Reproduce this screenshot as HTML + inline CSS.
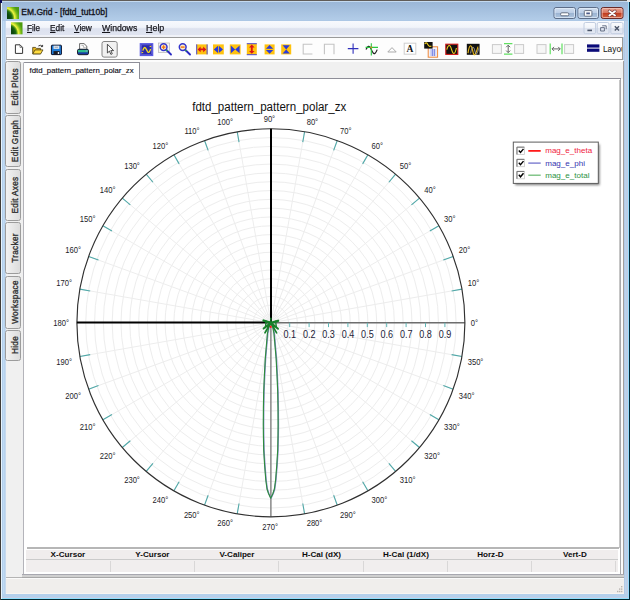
<!DOCTYPE html>
<html><head><meta charset="utf-8"><title>EM.Grid - [fdtd_tut10b]</title>
<style>
html,body{margin:0;padding:0;background:#fff;}
body{width:630px;height:600px;overflow:hidden;position:relative;font-family:"Liberation Sans",sans-serif;}
#win{position:absolute;left:0;top:0;width:630px;height:600px;background:#b6d0ea;overflow:hidden;}
.abs{position:absolute;}
#title{left:21.3px;top:7.4px;font-size:8.5px;color:#101018;-webkit-text-stroke:0.3px #101018;white-space:nowrap;line-height:10px;}
#menubar{left:6px;top:21px;width:618px;height:14px;background:linear-gradient(#f7f9fd 0%,#f1f4fa 45%,#dde2ef 55%,#e0e4f0 100%);}
#menubar2{left:6px;top:35px;width:618px;height:2px;background:#f0f2f8;}
.mi{position:absolute;top:23.2px;font-size:9px;line-height:10px;-webkit-text-stroke:0.25px #15151c;transform:scaleX(0.9);transform-origin:0 0;color:#15151c;white-space:nowrap;}
.mi u{text-decoration:underline;text-decoration-thickness:1px;text-underline-offset:1px;}
#toolbar{left:6px;top:37px;width:617px;height:23px;background:#fdfdfd;box-sizing:border-box;border:1px solid #9a9a9a;border-left-color:#b5b5b5;}
#client{left:6px;top:60px;width:618px;height:519px;background:#f0f0f0;}
#status{left:6px;top:578px;width:618px;height:16px;background:#f0eeec;border-top:1px solid #fafafa;border-bottom:1px solid #f8f4f0;box-sizing:border-box;}
.vtab{position:absolute;left:5.4px;width:16.1px;box-sizing:border-box;border:1px solid #9c9c9c;border-radius:2.5px;background:linear-gradient(90deg,#f2f2f2,#dcdcdc);}
.vtab span{position:absolute;left:50%;top:50%;transform:translate(-50%,-50%) rotate(-90deg) scaleX(0.93);white-space:nowrap;font-size:8.9px;font-weight:normal;-webkit-text-stroke:0.3px #2a2a2a;color:#2a2a2a;margin-left:1.2px;letter-spacing:0.3px}
.al{font-size:8.6px;fill:#1c1c28;font-family:"Liberation Sans",sans-serif;}
.rl{font-size:10.5px;fill:#1c1c38;font-family:"Liberation Sans",sans-serif;}
.ttl{font-size:12px;fill:#111;font-family:"Liberation Sans",sans-serif;}
.cur{position:absolute;top:549.5px;height:9px;margin-left:0.4px;font-size:8.1px;font-weight:bold;color:#0c0c0c;text-align:center;line-height:9px;white-space:nowrap;}
</style></head><body>
<div id="win">

<div class="abs" style="left:0;top:0;width:630px;height:21px;background:linear-gradient(180deg,#9ab5d5 0,#9cb8d8 3px,#b2cce8 20px,#a6c2e2 21px)"></div>
<div class="abs" style="left:0;top:21px;width:6px;height:579px;background:linear-gradient(90deg,#403c38 0,#403c38 1px,#e6f4fe 1px,#e6f4fe 2px,#b2cdea 2px,#b2cdea 3px,#c0dbf4 3px,#c0dbf4 4px,#b8d2ec 4px,#b8d2ec 5px,#c6d9ee 5px)"></div>
<div class="abs" style="left:624px;top:21px;width:6px;height:579px;background:linear-gradient(90deg,#b2cae6 0,#b2cae6 1px,#bcd2ee 1px,#bcd2ee 2px,#b8d0e8 2px,#b8d0e8 3px,#c4cce4 3px,#c4cce4 4px,#98dcfc 4px,#98dcfc 5px,#002838 5px)"></div>
<div class="abs" style="left:0;top:594px;width:630px;height:6px;background:linear-gradient(180deg,#b4d0ec 0,#b4d0ec 3px,#c8cce4 3px,#c8cce4 4px,#90e0ff 4px,#90e0ff 5px,#002830 5px)"></div>
<div class="abs" style="left:0;top:0;width:630px;height:1px;background:#605c58"></div>
<div class="abs" style="left:1px;top:1px;width:628px;height:1px;background:#c4daf0"></div>
<div class="abs" style="left:0;top:0;width:1px;height:600px;background:#403c38"></div>
<div class="abs" style="left:1px;top:1px;width:1px;height:598px;background:#e6f4fe"></div>
<div class="abs" style="left:629px;top:0;width:1px;height:600px;background:#002838"></div>
<div class="abs" style="left:628px;top:1px;width:1px;height:598px;background:#98dcfc"></div>
<div class="abs" style="left:0;top:0;width:2px;height:3px;background:#0a0a5a"></div>
<div class="abs" style="left:627px;top:0;width:3px;height:2px;background:#e8e8e8"></div>
<div class="abs" id="title">EM.Grid - [fdtd_tut10b]</div>
<div class="abs" id="menubar"></div><div class="abs" id="menubar2"></div>
<div class="mi" style="left:26.8px;transform:scaleX(0.9)"><u>F</u>ile</div>
<div class="mi" style="left:49.6px;transform:scaleX(0.92)"><u>E</u>dit</div>
<div class="mi" style="left:74.2px;transform:scaleX(0.92)"><u>V</u>iew</div>
<div class="mi" style="left:101.8px;transform:scaleX(0.965)"><u>W</u>indows</div>
<div class="mi" style="left:146.4px;transform:scaleX(0.99)"><u>H</u>elp</div>
<div class="abs" id="toolbar"></div>
<div class="abs" id="client"></div>
<div class="abs" style="left:6px;top:60px;width:617px;height:1.5px;background:#fcfcfc"></div>
<!-- left vertical tabs -->
<div class="vtab" style="top:61.4px;height:52.2px"><span>Edit Plots</span></div>
<div class="vtab" style="top:115px;height:52.4px"><span>Edit Graph</span></div>
<div class="vtab" style="top:168.6px;height:52.4px"><span>Edit Axes</span></div>
<div class="vtab" style="top:222.4px;height:51.8px"><span>Tracker</span></div>
<div class="vtab" style="top:275.6px;height:53.2px"><span>Workspace</span></div>
<div class="vtab" style="top:329.7px;height:31.3px"><span>Hide</span></div>
<!-- tab strip + page -->
<div class="abs" style="left:23px;top:77.8px;width:598px;height:1px;background:#8e8e98"></div>
<div class="abs" style="left:140px;top:78.8px;width:481px;height:0.8px;background:#d2d2d8"></div>
<div class="abs" style="left:23px;top:62px;width:117px;height:17px;background:#fff;border:1px solid #8e8e98;border-left-color:#b4b4ba;border-bottom:none;border-radius:1.5px 0 0 0;box-sizing:border-box;"></div>
<div class="abs" style="left:29.5px;top:65.6px;font-size:7.8px;line-height:9px;color:#101018;-webkit-text-stroke:0.15px #101018;white-space:nowrap;" id="tabtxt">fdtd_pattern_pattern_polar_zx</div>
<div class="abs" style="left:23px;top:79px;width:598px;height:495px;background:#fff;border-left:1px solid #b4b4ba;border-right:1px solid #a8a8ac;box-sizing:border-box;"></div>
<!-- plot area border bits -->
<div class="abs" style="left:26.5px;top:547.3px;width:592.5px;height:1.9px;background:#b6b6b6"></div>
<div class="abs" style="left:618.5px;top:80px;width:1px;height:468px;background:#c6c6c6"></div>
<div class="abs" style="left:621px;top:79px;width:2px;height:495px;background:#fbfbfb"></div>
<div class="abs" style="left:623px;top:61px;width:1px;height:517px;background:#a29e9e"></div>
<!-- cursor table -->
<div class="abs" style="left:26px;top:549.5px;width:592px;height:9px;background:#f0eded"></div>
<div class="abs" style="left:26px;top:558.6px;width:592px;height:1.2px;background:#cbcbcb"></div>
<div class="abs" style="left:26px;top:560px;width:592px;height:12px;background:#f1eeee"></div>
<div class="abs" style="left:22px;top:574px;width:602px;height:4.3px;background:linear-gradient(#a8a8b0 0,#a8a8b0 1px,#d0d0d0 1px,#d0d0d0 3.3px,#a8a8a8 3.3px)"></div>
<div class="abs" style="left:6px;top:577.3px;width:16px;height:1px;background:#b4b4b4"></div>
<div class="cur" style="left:25.3px;width:84.5px">X-Cursor</div>
<div class="cur" style="left:109.8px;width:84.5px">Y-Cursor</div>
<div class="cur" style="left:194.3px;width:84.5px">V-Caliper</div>
<div class="cur" style="left:278.8px;width:84.5px">H-Cal (dX)</div>
<div class="cur" style="left:363.3px;width:84.5px">H-Cal (1/dX)</div>
<div class="cur" style="left:447.8px;width:84.5px">Horz-D</div>
<div class="cur" style="left:532.3px;width:84.5px">Vert-D</div>
<div class="abs" style="left:110px;top:560.5px;width:1px;height:11px;background:#d9d7d7"></div>
<div class="abs" style="left:194.4px;top:560.5px;width:1px;height:11px;background:#d9d7d7"></div>
<div class="abs" style="left:278.2px;top:560.5px;width:1px;height:11px;background:#d9d7d7"></div>
<div class="abs" style="left:362.5px;top:560.5px;width:1px;height:11px;background:#d9d7d7"></div>
<div class="abs" style="left:446.8px;top:560.5px;width:1px;height:11px;background:#d9d7d7"></div>
<div class="abs" style="left:531px;top:560.5px;width:1px;height:11px;background:#d9d7d7"></div>
<div class="abs" style="left:615px;top:560.5px;width:1px;height:11px;background:#d9d7d7"></div>

<div class="abs" id="status"></div>
<svg class="abs" style="left:614px;top:585px" width="10" height="10" viewBox="0 0 10 10"><g fill="#b8b4b0"><rect x="7" y="1" width="1.4" height="1.4"/><rect x="5" y="3.4" width="1.4" height="1.4"/><rect x="7" y="3.4" width="1.4" height="1.4"/><rect x="3" y="5.8" width="1.4" height="1.4"/><rect x="5" y="5.8" width="1.4" height="1.4"/><rect x="7" y="5.8" width="1.4" height="1.4"/></g></svg>
<svg class="abs" style="left:0;top:0" width="630" height="600" viewBox="0 0 630 600">
<circle cx="270.9" cy="322.8" r="8.82" fill="none" stroke="#ededed" stroke-width="1"/>
<circle cx="270.9" cy="322.8" r="17.64" fill="none" stroke="#ededed" stroke-width="1"/>
<circle cx="270.9" cy="322.8" r="26.45" fill="none" stroke="#ededed" stroke-width="1"/>
<circle cx="270.9" cy="322.8" r="35.27" fill="none" stroke="#ededed" stroke-width="1"/>
<circle cx="270.9" cy="322.8" r="44.09" fill="none" stroke="#ededed" stroke-width="1"/>
<circle cx="270.9" cy="322.8" r="52.91" fill="none" stroke="#ededed" stroke-width="1"/>
<circle cx="270.9" cy="322.8" r="61.73" fill="none" stroke="#ededed" stroke-width="1"/>
<circle cx="270.9" cy="322.8" r="70.55" fill="none" stroke="#ededed" stroke-width="1"/>
<circle cx="270.9" cy="322.8" r="79.36" fill="none" stroke="#ededed" stroke-width="1"/>
<circle cx="270.9" cy="322.8" r="88.18" fill="none" stroke="#ededed" stroke-width="1"/>
<circle cx="270.9" cy="322.8" r="97.00" fill="none" stroke="#ededed" stroke-width="1"/>
<circle cx="270.9" cy="322.8" r="105.82" fill="none" stroke="#ededed" stroke-width="1"/>
<circle cx="270.9" cy="322.8" r="114.64" fill="none" stroke="#ededed" stroke-width="1"/>
<circle cx="270.9" cy="322.8" r="123.45" fill="none" stroke="#ededed" stroke-width="1"/>
<circle cx="270.9" cy="322.8" r="132.27" fill="none" stroke="#ededed" stroke-width="1"/>
<circle cx="270.9" cy="322.8" r="141.09" fill="none" stroke="#ededed" stroke-width="1"/>
<circle cx="270.9" cy="322.8" r="149.91" fill="none" stroke="#ededed" stroke-width="1"/>
<circle cx="270.9" cy="322.8" r="158.73" fill="none" stroke="#ededed" stroke-width="1"/>
<circle cx="270.9" cy="322.8" r="167.55" fill="none" stroke="#ededed" stroke-width="1"/>
<circle cx="270.9" cy="322.8" r="176.36" fill="none" stroke="#ededed" stroke-width="1"/>
<circle cx="270.9" cy="322.8" r="185.18" fill="none" stroke="#ededed" stroke-width="1"/>
<line x1="270.9" y1="322.8" x2="464.90" y2="322.80" stroke="#ededed" stroke-width="1"/>
<line x1="270.9" y1="322.8" x2="461.95" y2="289.11" stroke="#ededed" stroke-width="1"/>
<line x1="270.9" y1="322.8" x2="453.20" y2="256.45" stroke="#ededed" stroke-width="1"/>
<line x1="270.9" y1="322.8" x2="438.91" y2="225.80" stroke="#ededed" stroke-width="1"/>
<line x1="270.9" y1="322.8" x2="419.51" y2="198.10" stroke="#ededed" stroke-width="1"/>
<line x1="270.9" y1="322.8" x2="395.60" y2="174.19" stroke="#ededed" stroke-width="1"/>
<line x1="270.9" y1="322.8" x2="367.90" y2="154.79" stroke="#ededed" stroke-width="1"/>
<line x1="270.9" y1="322.8" x2="337.25" y2="140.50" stroke="#ededed" stroke-width="1"/>
<line x1="270.9" y1="322.8" x2="304.59" y2="131.75" stroke="#ededed" stroke-width="1"/>
<line x1="270.9" y1="322.8" x2="270.90" y2="128.80" stroke="#ededed" stroke-width="1"/>
<line x1="270.9" y1="322.8" x2="237.21" y2="131.75" stroke="#ededed" stroke-width="1"/>
<line x1="270.9" y1="322.8" x2="204.55" y2="140.50" stroke="#ededed" stroke-width="1"/>
<line x1="270.9" y1="322.8" x2="173.90" y2="154.79" stroke="#ededed" stroke-width="1"/>
<line x1="270.9" y1="322.8" x2="146.20" y2="174.19" stroke="#ededed" stroke-width="1"/>
<line x1="270.9" y1="322.8" x2="122.29" y2="198.10" stroke="#ededed" stroke-width="1"/>
<line x1="270.9" y1="322.8" x2="102.89" y2="225.80" stroke="#ededed" stroke-width="1"/>
<line x1="270.9" y1="322.8" x2="88.60" y2="256.45" stroke="#ededed" stroke-width="1"/>
<line x1="270.9" y1="322.8" x2="79.85" y2="289.11" stroke="#ededed" stroke-width="1"/>
<line x1="270.9" y1="322.8" x2="76.90" y2="322.80" stroke="#ededed" stroke-width="1"/>
<line x1="270.9" y1="322.8" x2="79.85" y2="356.49" stroke="#ededed" stroke-width="1"/>
<line x1="270.9" y1="322.8" x2="88.60" y2="389.15" stroke="#ededed" stroke-width="1"/>
<line x1="270.9" y1="322.8" x2="102.89" y2="419.80" stroke="#ededed" stroke-width="1"/>
<line x1="270.9" y1="322.8" x2="122.29" y2="447.50" stroke="#ededed" stroke-width="1"/>
<line x1="270.9" y1="322.8" x2="146.20" y2="471.41" stroke="#ededed" stroke-width="1"/>
<line x1="270.9" y1="322.8" x2="173.90" y2="490.81" stroke="#ededed" stroke-width="1"/>
<line x1="270.9" y1="322.8" x2="204.55" y2="505.10" stroke="#ededed" stroke-width="1"/>
<line x1="270.9" y1="322.8" x2="237.21" y2="513.85" stroke="#ededed" stroke-width="1"/>
<line x1="270.9" y1="322.8" x2="270.90" y2="516.80" stroke="#ededed" stroke-width="1"/>
<line x1="270.9" y1="322.8" x2="304.59" y2="513.85" stroke="#ededed" stroke-width="1"/>
<line x1="270.9" y1="322.8" x2="337.25" y2="505.10" stroke="#ededed" stroke-width="1"/>
<line x1="270.9" y1="322.8" x2="367.90" y2="490.81" stroke="#ededed" stroke-width="1"/>
<line x1="270.9" y1="322.8" x2="395.60" y2="471.41" stroke="#ededed" stroke-width="1"/>
<line x1="270.9" y1="322.8" x2="419.51" y2="447.50" stroke="#ededed" stroke-width="1"/>
<line x1="270.9" y1="322.8" x2="438.91" y2="419.80" stroke="#ededed" stroke-width="1"/>
<line x1="270.9" y1="322.8" x2="453.20" y2="389.15" stroke="#ededed" stroke-width="1"/>
<line x1="270.9" y1="322.8" x2="461.95" y2="356.49" stroke="#ededed" stroke-width="1"/>
<line x1="461.95" y1="289.11" x2="451.61" y2="290.94" stroke="#4fa8a8" stroke-width="1.1"/>
<line x1="453.20" y1="256.45" x2="443.33" y2="260.04" stroke="#4fa8a8" stroke-width="1.1"/>
<line x1="438.91" y1="225.80" x2="429.82" y2="231.05" stroke="#4fa8a8" stroke-width="1.1"/>
<line x1="419.51" y1="198.10" x2="411.47" y2="204.85" stroke="#4fa8a8" stroke-width="1.1"/>
<line x1="395.60" y1="174.19" x2="388.85" y2="182.23" stroke="#4fa8a8" stroke-width="1.1"/>
<line x1="367.90" y1="154.79" x2="362.65" y2="163.88" stroke="#4fa8a8" stroke-width="1.1"/>
<line x1="337.25" y1="140.50" x2="333.66" y2="150.37" stroke="#4fa8a8" stroke-width="1.1"/>
<line x1="304.59" y1="131.75" x2="302.76" y2="142.09" stroke="#4fa8a8" stroke-width="1.1"/>
<line x1="237.21" y1="131.75" x2="239.04" y2="142.09" stroke="#4fa8a8" stroke-width="1.1"/>
<line x1="204.55" y1="140.50" x2="208.14" y2="150.37" stroke="#4fa8a8" stroke-width="1.1"/>
<line x1="173.90" y1="154.79" x2="179.15" y2="163.88" stroke="#4fa8a8" stroke-width="1.1"/>
<line x1="146.20" y1="174.19" x2="152.95" y2="182.23" stroke="#4fa8a8" stroke-width="1.1"/>
<line x1="122.29" y1="198.10" x2="130.33" y2="204.85" stroke="#4fa8a8" stroke-width="1.1"/>
<line x1="102.89" y1="225.80" x2="111.98" y2="231.05" stroke="#4fa8a8" stroke-width="1.1"/>
<line x1="88.60" y1="256.45" x2="98.47" y2="260.04" stroke="#4fa8a8" stroke-width="1.1"/>
<line x1="79.85" y1="289.11" x2="90.19" y2="290.94" stroke="#4fa8a8" stroke-width="1.1"/>
<line x1="79.85" y1="356.49" x2="90.19" y2="354.66" stroke="#4fa8a8" stroke-width="1.1"/>
<line x1="88.60" y1="389.15" x2="98.47" y2="385.56" stroke="#4fa8a8" stroke-width="1.1"/>
<line x1="102.89" y1="419.80" x2="111.98" y2="414.55" stroke="#4fa8a8" stroke-width="1.1"/>
<line x1="122.29" y1="447.50" x2="130.33" y2="440.75" stroke="#4fa8a8" stroke-width="1.1"/>
<line x1="146.20" y1="471.41" x2="152.95" y2="463.37" stroke="#4fa8a8" stroke-width="1.1"/>
<line x1="173.90" y1="490.81" x2="179.15" y2="481.72" stroke="#4fa8a8" stroke-width="1.1"/>
<line x1="204.55" y1="505.10" x2="208.14" y2="495.23" stroke="#4fa8a8" stroke-width="1.1"/>
<line x1="237.21" y1="513.85" x2="239.04" y2="503.51" stroke="#4fa8a8" stroke-width="1.1"/>
<line x1="304.59" y1="513.85" x2="302.76" y2="503.51" stroke="#4fa8a8" stroke-width="1.1"/>
<line x1="337.25" y1="505.10" x2="333.66" y2="495.23" stroke="#4fa8a8" stroke-width="1.1"/>
<line x1="367.90" y1="490.81" x2="362.65" y2="481.72" stroke="#4fa8a8" stroke-width="1.1"/>
<line x1="395.60" y1="471.41" x2="388.85" y2="463.37" stroke="#4fa8a8" stroke-width="1.1"/>
<line x1="419.51" y1="447.50" x2="411.47" y2="440.75" stroke="#4fa8a8" stroke-width="1.1"/>
<line x1="438.91" y1="419.80" x2="429.82" y2="414.55" stroke="#4fa8a8" stroke-width="1.1"/>
<line x1="453.20" y1="389.15" x2="443.33" y2="385.56" stroke="#4fa8a8" stroke-width="1.1"/>
<line x1="461.95" y1="356.49" x2="451.61" y2="354.66" stroke="#4fa8a8" stroke-width="1.1"/>
<line x1="270.9" y1="322.8" x2="464.9" y2="322.8" stroke="#6e6e6e" stroke-width="1.4"/>
<line x1="270.9" y1="322.8" x2="270.9" y2="516.8" stroke="#707070" stroke-width="1.2"/>
<line x1="289.70" y1="322.8" x2="289.70" y2="327.1" stroke="#5fb5b5" stroke-width="1"/>
<text x="289.80" y="338" class="rl" text-anchor="middle" textLength="12.6" lengthAdjust="spacingAndGlyphs">0.1</text>
<line x1="309.10" y1="322.8" x2="309.10" y2="327.1" stroke="#5fb5b5" stroke-width="1"/>
<text x="309.20" y="338" class="rl" text-anchor="middle" textLength="12.6" lengthAdjust="spacingAndGlyphs">0.2</text>
<line x1="328.50" y1="322.8" x2="328.50" y2="327.1" stroke="#5fb5b5" stroke-width="1"/>
<text x="328.60" y="338" class="rl" text-anchor="middle" textLength="12.6" lengthAdjust="spacingAndGlyphs">0.3</text>
<line x1="347.90" y1="322.8" x2="347.90" y2="327.1" stroke="#5fb5b5" stroke-width="1"/>
<text x="348.00" y="338" class="rl" text-anchor="middle" textLength="12.6" lengthAdjust="spacingAndGlyphs">0.4</text>
<line x1="367.30" y1="322.8" x2="367.30" y2="327.1" stroke="#5fb5b5" stroke-width="1"/>
<text x="367.40" y="338" class="rl" text-anchor="middle" textLength="12.6" lengthAdjust="spacingAndGlyphs">0.5</text>
<line x1="386.70" y1="322.8" x2="386.70" y2="327.1" stroke="#5fb5b5" stroke-width="1"/>
<text x="386.80" y="338" class="rl" text-anchor="middle" textLength="12.6" lengthAdjust="spacingAndGlyphs">0.6</text>
<line x1="406.10" y1="322.8" x2="406.10" y2="327.1" stroke="#5fb5b5" stroke-width="1"/>
<text x="406.20" y="338" class="rl" text-anchor="middle" textLength="12.6" lengthAdjust="spacingAndGlyphs">0.7</text>
<line x1="425.50" y1="322.8" x2="425.50" y2="327.1" stroke="#5fb5b5" stroke-width="1"/>
<text x="425.60" y="338" class="rl" text-anchor="middle" textLength="12.6" lengthAdjust="spacingAndGlyphs">0.8</text>
<line x1="444.90" y1="322.8" x2="444.90" y2="327.1" stroke="#5fb5b5" stroke-width="1"/>
<text x="445.00" y="338" class="rl" text-anchor="middle" textLength="12.6" lengthAdjust="spacingAndGlyphs">0.9</text>
<circle cx="270.9" cy="322.8" r="194.0" fill="none" stroke="#303030" stroke-width="1.15"/>
<line x1="76.89999999999998" y1="322.6" x2="270.9" y2="322.6" stroke="#000" stroke-width="2"/>
<line x1="271.0" y1="128.8" x2="271.0" y2="322.8" stroke="#000" stroke-width="2"/>
<path d="M270.70,322.80 L268.70,327.00 L267.45,333.30 L266.70,341.70 L265.30,358.30 L264.40,375.00 L263.70,391.70 L263.40,408.30 L263.30,425.00 L263.40,435.00 L263.70,450.00 L264.60,465.00 L265.80,480.00 L267.00,489.00 L268.50,493.50 L270.70,498.20 L270.70,498.20 L272.90,493.50 L274.40,489.00 L275.60,480.00 L276.80,465.00 L277.70,450.00 L278.00,435.00 L278.10,425.00 L278.00,408.30 L277.70,391.70 L277.00,375.00 L276.10,358.30 L274.70,341.70 L273.95,333.30 L272.70,327.00 L270.70,322.80" fill="none" stroke="#8a8ad0" stroke-width="1.4" stroke-linejoin="round" transform="translate(0.35,0)"/>
<path d="M270.70,322.80 L268.70,327.00 L267.45,333.30 L266.70,341.70 L265.30,358.30 L264.40,375.00 L263.70,391.70 L263.40,408.30 L263.30,425.00 L263.40,435.00 L263.70,450.00 L264.60,465.00 L265.80,480.00 L267.00,489.00 L268.50,493.50 L270.70,498.20 L270.70,498.20 L272.90,493.50 L274.40,489.00 L275.60,480.00 L276.80,465.00 L277.70,450.00 L278.00,435.00 L278.10,425.00 L278.00,408.30 L277.70,391.70 L277.00,375.00 L276.10,358.30 L274.70,341.70 L273.95,333.30 L272.70,327.00 L270.70,322.80" fill="none" stroke="#2e8c3e" stroke-width="1.15" stroke-linejoin="round"/>
<line x1="270.9" y1="322.8" x2="270.9" y2="318.2" stroke="#17802a" stroke-width="1.3" stroke-linecap="round"/>
<line x1="270.9" y1="322.8" x2="263.6" y2="320.6" stroke="#17802a" stroke-width="2.4" stroke-linecap="round"/>
<line x1="270.9" y1="322.8" x2="278.0" y2="320.8" stroke="#17802a" stroke-width="2.4" stroke-linecap="round"/>
<line x1="270.9" y1="322.8" x2="263.6" y2="328.6" stroke="#17802a" stroke-width="1.9" stroke-linecap="round"/>
<line x1="270.9" y1="322.8" x2="278.0" y2="328.8" stroke="#17802a" stroke-width="1.9" stroke-linecap="round"/>
<line x1="270.9" y1="322.8" x2="265.0" y2="332.8" stroke="#17802a" stroke-width="1.7" stroke-linecap="round"/>
<line x1="270.9" y1="322.8" x2="276.6" y2="332.8" stroke="#17802a" stroke-width="1.7" stroke-linecap="round"/>
<line x1="270.9" y1="322.8" x2="267.4" y2="326.5" stroke="#17802a" stroke-width="2.2" stroke-linecap="round"/>
<line x1="270.9" y1="322.8" x2="274.2" y2="326.5" stroke="#17802a" stroke-width="2.2" stroke-linecap="round"/>
<path d="M266.2 321.2 L265.4 327.6 M275.6 321.2 L276.4 327.6" stroke="#17802a" stroke-width="1.4" stroke-linecap="round"/>
<rect x="269.8" y="325.8" width="1.8" height="2" fill="#ff1010"/>
<text transform="translate(470.70,325.95) scale(0.885,1)" class="al" text-anchor="start">0°</text>
<text transform="translate(467.68,286.33) scale(0.885,1)" class="al" text-anchor="start">10°</text>
<text transform="translate(458.73,252.91) scale(0.885,1)" class="al" text-anchor="start">20°</text>
<text transform="translate(444.11,221.55) scale(0.885,1)" class="al" text-anchor="start">30°</text>
<text transform="translate(424.26,193.21) scale(0.885,1)" class="al" text-anchor="start">40°</text>
<text transform="translate(399.79,168.74) scale(0.885,1)" class="al" text-anchor="start">50°</text>
<text transform="translate(371.45,148.89) scale(0.885,1)" class="al" text-anchor="start">60°</text>
<text transform="translate(340.09,134.27) scale(0.885,1)" class="al" text-anchor="start">70°</text>
<text transform="translate(306.67,125.32) scale(0.885,1)" class="al" text-anchor="start">80°</text>
<text transform="translate(269.40,121.90) scale(0.885,1)" class="al" text-anchor="middle">90°</text>
<text transform="translate(233.03,125.32) scale(0.885,1)" class="al" text-anchor="end">100°</text>
<text transform="translate(199.61,134.27) scale(0.885,1)" class="al" text-anchor="end">110°</text>
<text transform="translate(168.25,148.89) scale(0.885,1)" class="al" text-anchor="end">120°</text>
<text transform="translate(139.91,168.74) scale(0.885,1)" class="al" text-anchor="end">130°</text>
<text transform="translate(115.44,193.21) scale(0.885,1)" class="al" text-anchor="end">140°</text>
<text transform="translate(95.59,221.55) scale(0.885,1)" class="al" text-anchor="end">150°</text>
<text transform="translate(80.97,252.91) scale(0.885,1)" class="al" text-anchor="end">160°</text>
<text transform="translate(72.02,286.33) scale(0.885,1)" class="al" text-anchor="end">170°</text>
<text transform="translate(69.00,325.55) scale(0.885,1)" class="al" text-anchor="end">180°</text>
<text transform="translate(72.02,365.47) scale(0.885,1)" class="al" text-anchor="end">190°</text>
<text transform="translate(80.97,398.89) scale(0.885,1)" class="al" text-anchor="end">200°</text>
<text transform="translate(95.59,430.25) scale(0.885,1)" class="al" text-anchor="end">210°</text>
<text transform="translate(115.44,458.59) scale(0.885,1)" class="al" text-anchor="end">220°</text>
<text transform="translate(139.91,483.06) scale(0.885,1)" class="al" text-anchor="end">230°</text>
<text transform="translate(168.25,502.91) scale(0.885,1)" class="al" text-anchor="end">240°</text>
<text transform="translate(199.61,517.53) scale(0.885,1)" class="al" text-anchor="end">250°</text>
<text transform="translate(233.03,526.48) scale(0.885,1)" class="al" text-anchor="end">260°</text>
<text transform="translate(270.10,529.80) scale(0.885,1)" class="al" text-anchor="middle">270°</text>
<text transform="translate(306.67,526.48) scale(0.885,1)" class="al" text-anchor="start">280°</text>
<text transform="translate(340.09,517.53) scale(0.885,1)" class="al" text-anchor="start">290°</text>
<text transform="translate(371.45,502.91) scale(0.885,1)" class="al" text-anchor="start">300°</text>
<text transform="translate(399.79,483.06) scale(0.885,1)" class="al" text-anchor="start">310°</text>
<text transform="translate(424.26,458.59) scale(0.885,1)" class="al" text-anchor="start">320°</text>
<text transform="translate(444.11,430.25) scale(0.885,1)" class="al" text-anchor="start">330°</text>
<text transform="translate(458.73,398.89) scale(0.885,1)" class="al" text-anchor="start">340°</text>
<text transform="translate(467.68,365.47) scale(0.885,1)" class="al" text-anchor="start">350°</text>
<text x="269.2" y="110.7" class="ttl" text-anchor="middle" textLength="154" lengthAdjust="spacingAndGlyphs">fdtd_pattern_pattern_polar_zx</text>
<defs><filter id="ds" x="-10%" y="-10%" width="130%" height="140%"><feGaussianBlur stdDeviation="0.9"/></filter></defs>
<rect x="515.1" y="144.4" width="84.6" height="40.8" fill="#707070" opacity="0.85" filter="url(#ds)"/>
<rect x="513.3" y="142.1" width="85" height="41.3" fill="#fff" stroke="#5c5c5c" stroke-width="1"/>
<rect x="517.2" y="147.3" width="7.2" height="7.2" fill="#fff" stroke="#c8c8c8" stroke-width="0.8"/>
<path d="M516.9 154.5 v-7.4 h7.4" fill="none" stroke="#707070" stroke-width="1"/>
<path d="M518.8 150.5 l1.7 2 l3 -3.6" fill="none" stroke="#000" stroke-width="1.4"/>
<line x1="528.3" y1="150.9" x2="540.7" y2="150.9" stroke="#ff0000" stroke-width="1.6"/>
<text x="545.2" y="153.4" fill="#f01c40" style="font-size:8.05px;font-family:'Liberation Sans',sans-serif">mag_e_theta</text>
<rect x="517.2" y="159.5" width="7.2" height="7.2" fill="#fff" stroke="#c8c8c8" stroke-width="0.8"/>
<path d="M516.9 166.7 v-7.4 h7.4" fill="none" stroke="#707070" stroke-width="1"/>
<path d="M518.8 162.7 l1.7 2 l3 -3.6" fill="none" stroke="#000" stroke-width="1.4"/>
<line x1="528.3" y1="163.1" x2="540.7" y2="163.1" stroke="#7272cc" stroke-width="1.3"/>
<text x="545.2" y="165.6" fill="#3434b0" style="font-size:8.05px;font-family:'Liberation Sans',sans-serif">mag_e_phi</text>
<rect x="517.2" y="171.6" width="7.2" height="7.2" fill="#fff" stroke="#c8c8c8" stroke-width="0.8"/>
<path d="M516.9 178.8 v-7.4 h7.4" fill="none" stroke="#707070" stroke-width="1"/>
<path d="M518.8 174.8 l1.7 2 l3 -3.6" fill="none" stroke="#000" stroke-width="1.4"/>
<line x1="528.3" y1="175.2" x2="540.7" y2="175.2" stroke="#70bc78" stroke-width="1.3"/>
<text x="545.2" y="177.7" fill="#2c9244" style="font-size:8.05px;font-family:'Liberation Sans',sans-serif">mag_e_total</text>
<text x="603" y="51.6" style="font-size:8.3px;font-family:'Liberation Sans',sans-serif" fill="#111" clip-path="url(#lc)">Layout</text>
<defs><clipPath id="lc"><rect x="600" y="40" width="22" height="16"/></clipPath></defs>
<defs>
<radialGradient id="gi" cx="-0.25" cy="0.95" r="1.3" gradientUnits="objectBoundingBox">
<stop offset="0" stop-color="#0c3c0c"/><stop offset="0.36" stop-color="#0e4a0c"/><stop offset="0.52" stop-color="#1f6a12"/><stop offset="0.6" stop-color="#6aa818"/><stop offset="0.68" stop-color="#f0f440"/><stop offset="0.76" stop-color="#c4de2c"/><stop offset="0.86" stop-color="#78bc18"/><stop offset="1" stop-color="#4c9a10"/>
</radialGradient>
<linearGradient id="cb" x1="0" y1="0" x2="0" y2="1"><stop offset="0" stop-color="#d3e0f0"/><stop offset="0.48" stop-color="#bccee6"/><stop offset="0.52" stop-color="#9cb4d2"/><stop offset="1" stop-color="#b0c6e0"/></linearGradient>
<linearGradient id="cr" x1="0" y1="0" x2="0" y2="1"><stop offset="0" stop-color="#e8a898"/><stop offset="0.48" stop-color="#d87660"/><stop offset="0.52" stop-color="#c03c20"/><stop offset="1" stop-color="#d46a48"/></linearGradient>
<linearGradient id="mb" x1="0" y1="0" x2="0" y2="1"><stop offset="0" stop-color="#fbfcfe"/><stop offset="0.48" stop-color="#f0f3f9"/><stop offset="0.52" stop-color="#dde3ef"/><stop offset="1" stop-color="#e4e9f3"/></linearGradient>
</defs>
<!-- app icons -->
<rect x="7" y="7" width="12" height="12" fill="url(#gi)"/>
<rect x="11" y="22.3" width="11.5" height="12" fill="url(#gi)"/>
<!-- caption buttons -->
<g stroke-width="1">
<rect x="554" y="7.5" width="21.5" height="11" rx="2" fill="url(#cb)" stroke="#5d6d88"/>
<rect x="555" y="8.5" width="19.5" height="9" rx="1.2" fill="none" stroke="#e4eefa" stroke-opacity="0.7"/>
<rect x="578" y="7.5" width="20.5" height="11" rx="2" fill="url(#cb)" stroke="#5d6d88"/>
<rect x="579" y="8.5" width="18.5" height="9" rx="1.2" fill="none" stroke="#e4eefa" stroke-opacity="0.7"/>
<rect x="601.2" y="7.5" width="21.8" height="11" rx="2" fill="url(#cr)" stroke="#6a2a28"/>
<rect x="602.2" y="8.5" width="19.8" height="9" rx="1.2" fill="none" stroke="#f6c8bc" stroke-opacity="0.7"/>
</g>
<rect x="560.6" y="12.8" width="8.2" height="3" rx="1.2" fill="#fff" stroke="#5a6478" stroke-width="0.9"/>
<rect x="584.3" y="10.6" width="7.6" height="5.6" rx="0.8" fill="#fff" stroke="#5a6478" stroke-width="0.9"/>
<rect x="586.3" y="12.5" width="3.6" height="1.8" fill="#4a5a88"/>
<path d="M609.4 11.2 L615 15.4 M615 11.2 L609.4 15.4" stroke="#7a3a38" stroke-width="3.2" stroke-linecap="round"/>
<path d="M609.4 11.2 L615 15.4 M615 11.2 L609.4 15.4" stroke="#fff" stroke-width="1.9" stroke-linecap="round"/>
<!-- MDI buttons -->
<rect x="584" y="22.5" width="11.6" height="11.2" rx="1.5" fill="url(#mb)" stroke="#c2cde0"/>
<rect x="597.2" y="22.5" width="11.8" height="11.2" rx="1.5" fill="url(#mb)" stroke="#c2cde0"/>
<rect x="610.8" y="22.5" width="12.2" height="11.2" rx="1.5" fill="url(#mb)" stroke="#c2cde0"/>
<rect x="587.4" y="29.6" width="4.6" height="1.6" fill="#4c566a"/>
<path d="M602.2 25.8 h4 v3.4 M600.6 27.6 h3.8 v3.4 h-3.8 z" fill="none" stroke="#5a647c" stroke-width="0.9"/>
<path d="M614.8 26.2 L619 30.4 M619 26.2 L614.8 30.4" stroke="#4c566a" stroke-width="1.4"/>

<!-- ===== toolbar icons ===== -->
<!-- new -->
<path d="M15.4 44.8 h4.6 l2.6 2.6 v6 h-7.2 z" fill="#fff" stroke="#333" stroke-width="1"/>
<path d="M20 44.8 v2.6 h2.6" fill="none" stroke="#555" stroke-width="0.7"/>
<!-- open -->
<path d="M32.7 53.8 v-6.4 h2.8 l0.9 1 h4.2 v5.4 z" fill="#e8b820" stroke="#4a3c10" stroke-width="0.8"/>
<path d="M32.8 53.9 l2.2 -4 h8 l-2.4 4 z" fill="#ffdc40" stroke="#4a3c10" stroke-width="0.8"/>
<path d="M38.4 46 q2.2 -1.6 3.8 0.2 M42.6 44.9 v1.7 h-1.7" fill="none" stroke="#222" stroke-width="0.9"/>
<!-- save -->
<rect x="51.4" y="45.2" width="10" height="9.4" rx="0.6" fill="#1e7cd8" stroke="#0a0f28" stroke-width="1"/>
<rect x="53.5" y="45.7" width="5.8" height="3.2" fill="#dfe6ee"/>
<rect x="54.6" y="46.8" width="3.4" height="0.8" fill="#8a94a8"/>
<rect x="53.5" y="51.1" width="6.2" height="3.4" fill="#1c1c24"/>
<rect x="57.8" y="52" width="1.3" height="2" fill="#e8eef8"/>
<!-- print -->
<path d="M79.6 49.4 v-5.8 h4.4 l2.8 2.6 v3.2 z" fill="#fff" stroke="#444" stroke-width="0.8"/>
<path d="M81.4 45.4 h2 v2 h2.4" fill="none" stroke="#999" stroke-width="0.7"/>
<rect x="77.5" y="49.3" width="11" height="5.4" rx="1.4" fill="#1a3aa4" stroke="#10141c" stroke-width="0.9"/>
<rect x="78" y="49.9" width="10" height="2.4" fill="#2cbc8c"/>
<rect x="85.6" y="50.4" width="1.6" height="1.2" fill="#8a98c8"/>
<!-- pointer (pressed) -->
<rect x="102" y="41.5" width="15.2" height="15.6" rx="2" fill="#f1f1f1" stroke="#858585" stroke-width="1"/>
<path d="M107.4 44.2 v8.8 l2 -1.9 l1.5 3.3 l1.4 -0.7 l-1.5 -3.1 h2.8 z" fill="#fff" stroke="#3a3a3a" stroke-width="0.9" stroke-linejoin="round"/>
<!-- scope -->
<rect x="140.3" y="43.7" width="12.4" height="11.8" fill="#2a2aaa" stroke="#5a5ae4" stroke-width="1.2"/>
<rect x="141.5" y="44.9" width="10" height="9.4" fill="none" stroke="#7c7ce8" stroke-width="0.5"/>
<path d="M142.8 50.6 q1.3 -4.6 2.8 -2.4 q1.4 2.2 2 3.4 q1.4 2.4 3 -2.6" fill="none" stroke="#f4dc20" stroke-width="1.3"/>
<rect x="141.6" y="52" width="1.6" height="1.1" fill="#f0d020"/><rect x="149.6" y="45.9" width="1.6" height="1.1" fill="#f0d020"/>
<!-- zoom in -->
<rect x="158.6" y="43" width="10.8" height="9.4" fill="#f5f5f5" stroke="#b4b4b4" stroke-width="0.7"/>
<path d="M166.4 50 L171 54.5" stroke="#2a2ac4" stroke-width="1.9" stroke-linecap="round"/>
<path d="M166 49.6 L167.4 51" stroke="#30a848" stroke-width="1.5"/>
<circle cx="163.6" cy="47.1" r="3.4" fill="#ffeec4" stroke="#3434cc" stroke-width="1.5"/>
<path d="M161.7 47.1 h3.8 M163.6 45.2 v3.8" stroke="#f07010" stroke-width="1.3"/>
<!-- zoom out -->
<path d="M185.4 50 L190 54.5" stroke="#2a2ac4" stroke-width="1.9" stroke-linecap="round"/>
<path d="M185 49.6 L186.4 51" stroke="#30a848" stroke-width="1.5"/>
<circle cx="182.7" cy="47.1" r="3.4" fill="#ffeec4" stroke="#3434cc" stroke-width="1.5"/>
<path d="M180.8 47.1 h3.8" stroke="#f07010" stroke-width="1.4"/>
<!-- orange boxes -->
<g>
<rect x="196.2" y="44.4" width="11.4" height="10" fill="#ffc20e"/>
<rect x="196.2" y="44.4" width="1" height="10" fill="#4a4ae0"/><rect x="206.6" y="44.4" width="1" height="10" fill="#4a4ae0"/>
<path d="M197.6 49.4 l3 -2.8 v1.9 h2.6 v-1.9 l3 2.8 l-3 2.8 v-1.9 h-2.6 v1.9 z" fill="#dc1414"/>
<rect x="213" y="44.4" width="10.8" height="10" fill="#ffc20e"/>
<path d="M213.8 49.4 l4.2 -3.6 v7.2 z M223 49.4 l-4.2 -3.6 v7.2 z" fill="#2a3adc"/>
<rect x="229.8" y="44.4" width="10.8" height="10" fill="#ffc20e"/>
<path d="M230.8 45.6 l4.4 3.8 l-4.4 3.8 z M239.6 45.6 l-4.4 3.8 l4.4 3.8 z" fill="#2a3adc"/>
<rect x="246.8" y="43.4" width="10" height="11.6" fill="#ffc20e"/>
<rect x="246.8" y="43.2" width="10" height="1" fill="#4a4ae0"/><rect x="246.8" y="54.2" width="10" height="1" fill="#4a4ae0"/>
<path d="M251.8 44.6 l2.8 2.8 h-1.9 v3.6 h1.9 l-2.8 2.8 l-2.8 -2.8 h1.9 v-3.6 h-1.9 z" fill="#dc1414"/>
<rect x="264.6" y="44.4" width="10" height="10" fill="#ffc20e"/>
<path d="M269.6 45 l3.7 3.8 h-7.4 z M269.6 53.8 l3.7 -3.8 h-7.4 z" fill="#2a3adc"/>
<rect x="281.2" y="44.4" width="10" height="10" fill="#ffc20e"/>
<path d="M282.6 45.2 h7.2 l-3.6 4.2 z M282.6 53.6 h7.2 l-3.6 -4.2 z" fill="#2a3adc"/>
</g>
<!-- gray brackets -->
<path d="M312.4 44.2 h-9.2 v9.8 h9.2" fill="none" stroke="#c4c4c4" stroke-width="1.1"/>
<path d="M324.4 54.2 v-10 h9.6 v10" fill="none" stroke="#c4c4c4" stroke-width="1.1"/>
<!-- blue plus -->
<path d="M347.8 48.6 h10.6 M353.1 43.4 v10.4" stroke="#3030bc" stroke-width="1.1"/>
<!-- sine + crosshair -->
<path d="M366 49.6 q2.6 -5.6 4.6 -1.6 q1.4 3.4 2.6 5 q1.8 2.2 4 -3.4" fill="none" stroke="#222" stroke-width="1.2"/>
<path d="M365.6 47.4 h12.4 M371.3 43.2 v12.4" stroke="#28c840" stroke-width="1.1"/>
<rect x="370.5" y="46.6" width="1.6" height="1.6" fill="#f07818"/>
<!-- gray triangle -->
<path d="M387.8 52 l4.2 -4.4 l4.2 4.4 z" fill="none" stroke="#ababab" stroke-width="1"/>
<!-- A box -->
<rect x="404.2" y="43.2" width="11.6" height="11" fill="#fff" stroke="#cfcfcf" stroke-width="1"/>
<text x="410" y="52.4" text-anchor="middle" style="font-family:'Liberation Serif',serif;font-weight:bold;font-size:9.5px" fill="#111">A</text>
<!-- small scope + orange box -->
<rect x="428.2" y="46.8" width="9.4" height="10.4" fill="#f4f5fc" stroke="#f08838" stroke-width="1"/>
<path d="M432.2 49 v7 M434.2 49 v7" stroke="#5060dc" stroke-width="1"/>
<path d="M430.4 49 v7 M435.8 49 v7" stroke="#c4c8ec" stroke-width="0.8"/>
<rect x="424.2" y="42" width="8.4" height="6.6" fill="#111"/>
<path d="M424.8 44 q1.6 -2.4 3 0.4 t3.6 1.6" fill="none" stroke="#f0d020" stroke-width="1.1"/>
<!-- black scope red border -->
<rect x="445.8" y="44.2" width="12" height="10.2" fill="#111" stroke="#d01818" stroke-width="1.1"/>
<path d="M446.8 49.6 c1.6 -5.4 3.2 -5.4 4.8 0 s3.2 5.4 4.8 -1.6" fill="none" stroke="#f0d020" stroke-width="1.1"/>
<!-- black scope 2 -->
<rect x="466.8" y="43.8" width="12.8" height="11" fill="#111"/>
<path d="M468 53.2 c1.4 -9.6 3.4 -9.6 4.8 -2 s3.4 1.6 5.2 -4.6" fill="none" stroke="#e8b818" stroke-width="1.1"/>
<path d="M470.6 53.4 c1.4 -8 3 -8 4.4 -2 s2.6 1 3.6 -3" fill="none" stroke="#b8b8b8" stroke-width="0.8"/>
<!-- check boxes + arrows -->
<g fill="#f6f6f6" stroke="#cacaca" stroke-width="1">
<rect x="492.4" y="44.6" width="9" height="8.8"/><rect x="514.6" y="44.6" width="9" height="8.8"/>
<rect x="537" y="44.6" width="9" height="8.8"/><rect x="564.6" y="44.6" width="9" height="8.8"/>
</g>
<path d="M504 43.6 h8.4 M504 54.2 h8.4" stroke="#60e060" stroke-width="1.2"/>
<path d="M508.2 45.2 v7.4 M506.2 47.2 l2 -2 l2 2 M506.2 50.6 l2 2 l2 -2" fill="none" stroke="#666" stroke-width="1"/>
<path d="M550.2 43.6 v10.6 M562 43.6 v10.6" stroke="#60e060" stroke-width="1.2"/>
<path d="M552 48.9 h8.2 M554 46.9 l-2 2 l2 2 M558.2 46.9 l2 2 l-2 2" fill="none" stroke="#666" stroke-width="1"/>
<!-- layout -->
<rect x="587" y="44.4" width="12.4" height="3.2" fill="#0a0a78"/><rect x="587" y="48.6" width="12.4" height="3.2" fill="#0a0a78"/>

</svg>
</div>
</body></html>
